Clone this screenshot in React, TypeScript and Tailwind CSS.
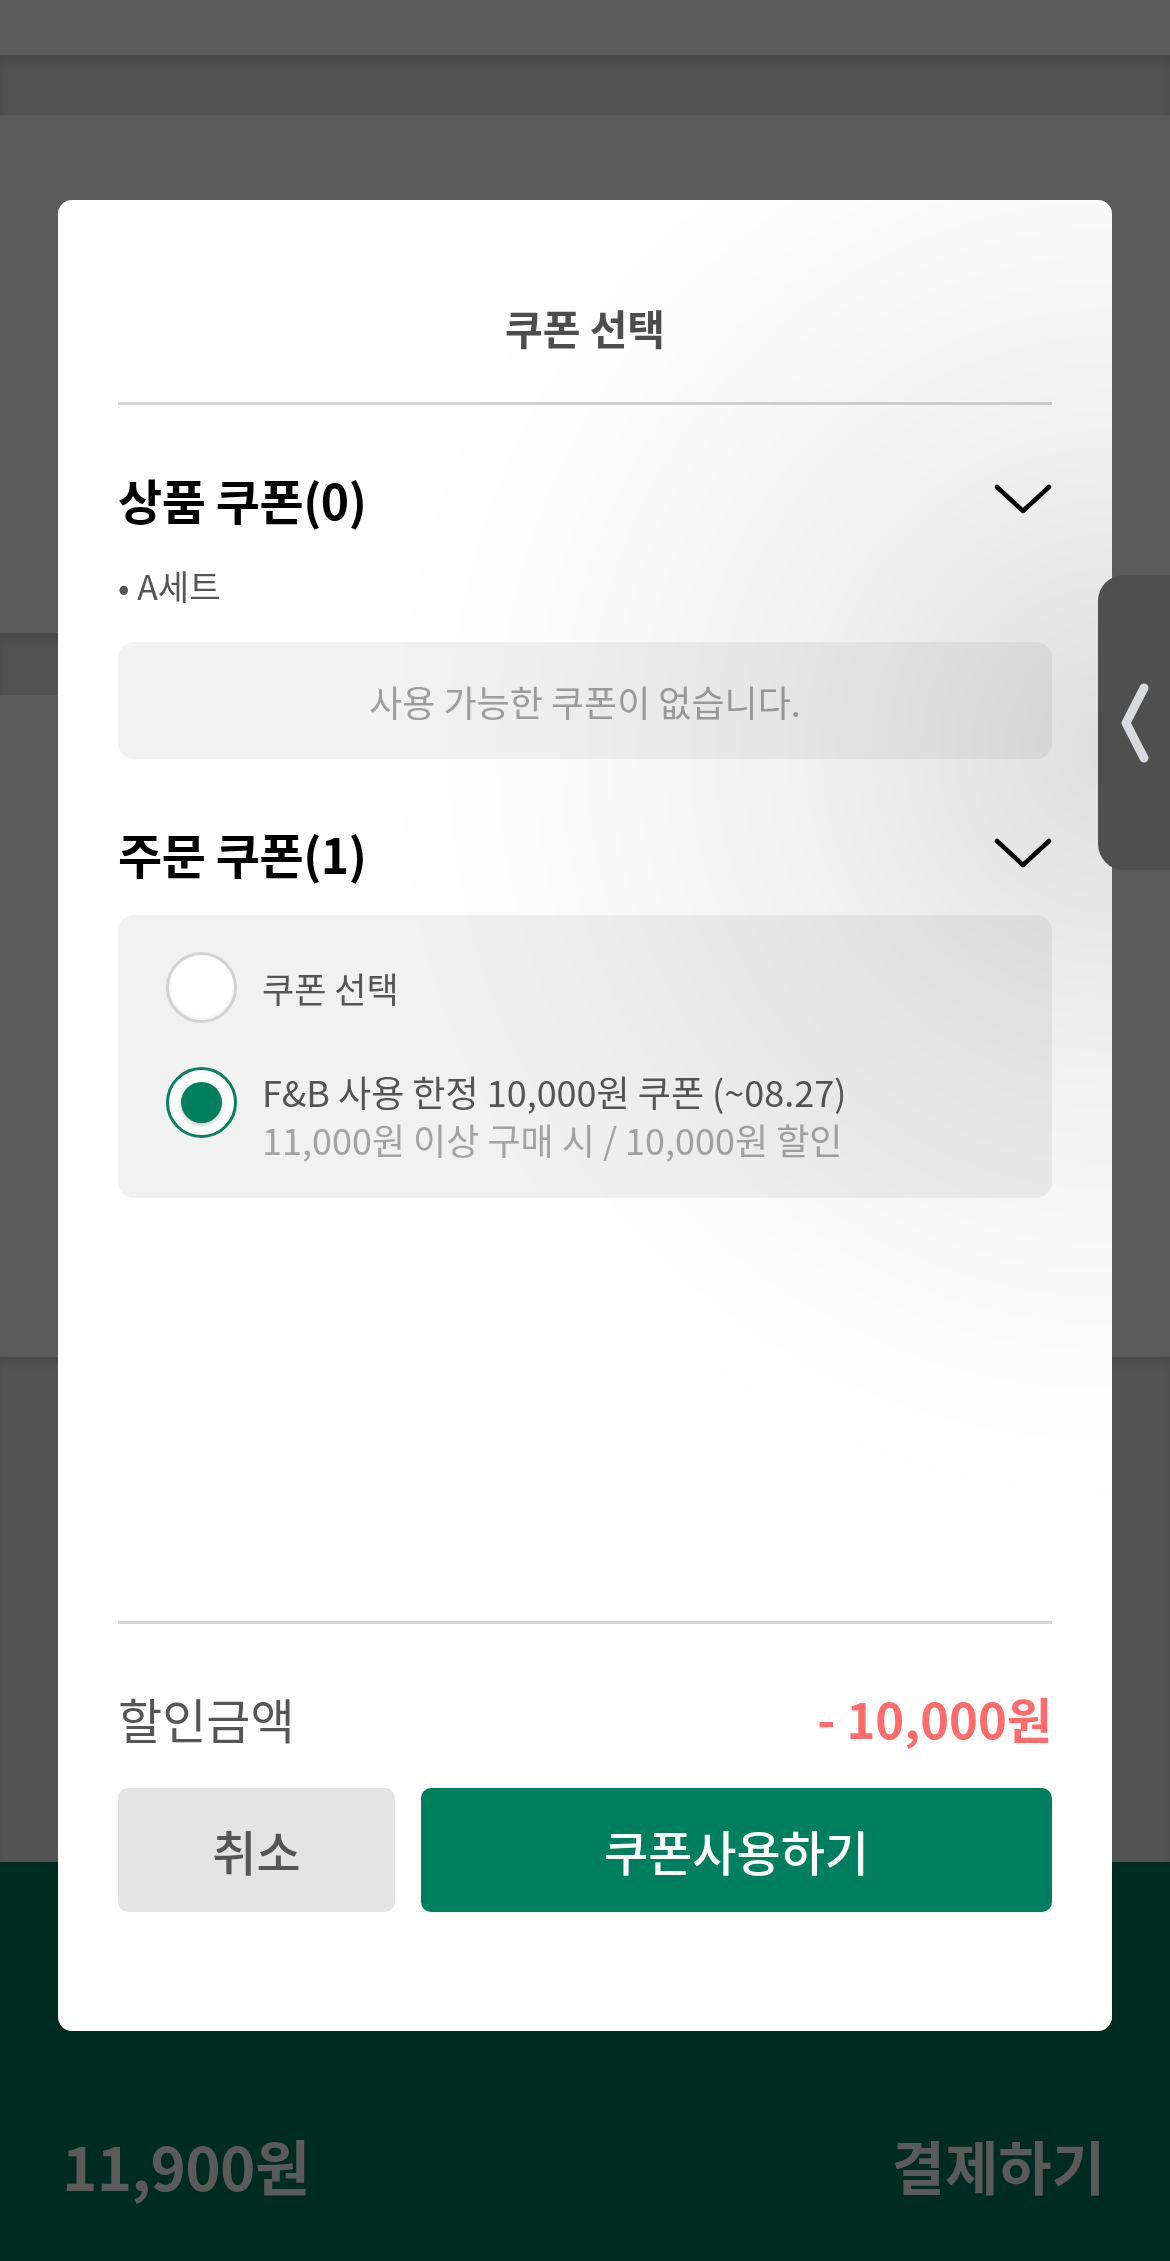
import React from "react";

const font = { fontFamily: '"Noto Sans CJK KR", "Noto Sans", sans-serif' };

function ChevronDown() {
  return (
    <svg width="58" height="32" viewBox="0 0 58 32" fill="none">
      <polyline
        points="3,4 29,28 55,4"
        stroke="#000"
        strokeWidth="4.5"
        strokeLinecap="round"
        strokeLinejoin="round"
      />
    </svg>
  );
}

function Radio({ checked }: { checked?: boolean }) {
  if (checked) {
    return (
      <div className="flex h-[71px] w-[71px] shrink-0 items-center justify-center rounded-full border-[3px] border-[#0a8062] bg-white">
        <div className="h-[41px] w-[41px] rounded-full bg-[#007f5f] shadow-[0_2px_4px_rgba(0,0,0,0.25)]" />
      </div>
    );
  }
  return (
    <div className="h-[71px] w-[71px] shrink-0 rounded-full border-[3px] border-[#d2d2d2] bg-white shadow-[inset_0_-2px_4px_rgba(0,0,0,0.06)]" />
  );
}

function SectionHeader({ title }: { title: string }) {
  return (
    <div className="flex h-[56px] items-center justify-between">
      <h3 className="text-[48px] font-bold leading-[56px] tracking-[-0.01em] text-black">
        {title}
      </h3>
      <ChevronDown />
    </div>
  );
}

export default function App() {
  return (
    <div className="relative h-[2261px] w-[1170px] overflow-hidden bg-[#5a5a5a]" style={font}>
      {/* dimmed page behind the modal */}
      <div className="flex h-full flex-col">
        <div className="h-[55px] bg-[#5b5b5b]" />
        <div className="h-[60px] bg-[#525252] shadow-[inset_0_6px_8px_rgba(0,0,0,0.12)]" />
        <div className="h-[518px] bg-[#5a5a5a]" />
        <div className="h-[62px] bg-[#525252] shadow-[inset_0_6px_8px_rgba(0,0,0,0.12)]" />
        <div className="h-[662px] bg-[#5a5a5a]" />
        <div className="h-[505px] bg-[#545454] shadow-[inset_0_6px_8px_rgba(0,0,0,0.12)]" />
        <div className="flex flex-1 items-start justify-between bg-[#002b20] px-[62px] pt-[268px]">
          <span className="text-[60px] font-bold leading-[70px] tracking-[-0.01em] text-[#5a5a5a]">
            11,900원
          </span>
          <span className="pr-[3px] text-[58px] font-bold leading-[70px] text-[#5a5a5a]">
            결제하기
          </span>
        </div>
      </div>

      {/* modal */}
      <div className="absolute inset-0 px-[58px] pt-[200px]">
        <div className="relative flex h-[1831px] flex-col overflow-hidden rounded-[14px] bg-white px-[60px]">
          <h2 className="pt-[104px] text-center text-[41px] font-bold leading-[46px] text-[#4d4d4d]">
            쿠폰 선택
          </h2>
          <div className="mt-[52px] h-[3px] bg-[#d4d4d4]" />

          <div className="mt-[66px]">
            <SectionHeader title="상품 쿠폰(0)" />
          </div>
          <p className="mt-[39px] text-[34px] leading-[40px] text-[#555]">• A세트</p>
          <div className="mt-[36px] flex h-[117px] items-center justify-center rounded-[16px] bg-[#f2f2f2]">
            <span className="text-[36px] text-[#9e9e9e]">사용 가능한 쿠폰이 없습니다.</span>
          </div>

          <div className="mt-[66px]">
            <SectionHeader title="주문 쿠폰(1)" />
          </div>
          <div className="mt-[34px] flex flex-col gap-[44px] rounded-[16px] bg-[#f1f1f1] pb-[35px] pl-[48px] pt-[37px]">
            <div className="flex items-center gap-[25px]">
              <Radio />
              <span className="text-[35px] leading-[46px] text-[#555]">쿠폰 선택</span>
            </div>
            <div className="flex items-start gap-[25px]">
              <Radio checked />
              <div className="flex flex-col">
                <span className="text-[36px] leading-[48px] text-[#555]">
                  F&amp;B 사용 한정 10,000원 쿠폰 (~08.27)
                </span>
                <span className="text-[36px] leading-[48px] text-[#a3a3a3]">
                  11,000원 이상 구매 시 / 10,000원 할인
                </span>
              </div>
            </div>
          </div>

          <div className="mt-auto h-[3px] bg-[#d4d4d4]" />
          <div className="mt-[66px] flex h-[56px] items-center justify-between">
            <span className="text-[48px] leading-[56px] text-[#555]">할인금액</span>
            <span className="text-[49px] font-bold leading-[56px] text-[#ff6b6b]">
              - 10,000원
            </span>
          </div>
          <div className="mb-[119px] mt-[42px] flex h-[124px] gap-[26px]">
            <button className="flex w-[277px] items-center justify-center rounded-[10px] bg-[#e4e4e4] text-[48px] font-medium text-[#555]">
              취소
            </button>
            <button className="flex flex-1 items-center justify-center rounded-[10px] bg-[#007f5f] text-[48px] font-medium text-white">
              쿠폰사용하기
            </button>
          </div>

          {/* screen glare */}
          <div className="pointer-events-none absolute inset-0 bg-[radial-gradient(ellipse_70%_42%_at_100%_30%,rgba(0,0,0,0.13),rgba(0,0,0,0.05)_45%,rgba(0,0,0,0.012)_80%,transparent)] mix-blend-multiply" />
        </div>
      </div>

      {/* side tab */}
      <div className="absolute left-[1098px] top-[575px] flex h-[295px] w-[72px] items-center justify-center rounded-l-[26px] bg-[#4f4f4f]">
        <svg width="40" height="90" viewBox="0 0 40 90" fill="none">
          <polyline
            points="30,10 12,45 30,80"
            stroke="#d9d9e0"
            strokeWidth="9"
            strokeLinecap="round"
            strokeLinejoin="round"
          />
        </svg>
      </div>
    </div>
  );
}
